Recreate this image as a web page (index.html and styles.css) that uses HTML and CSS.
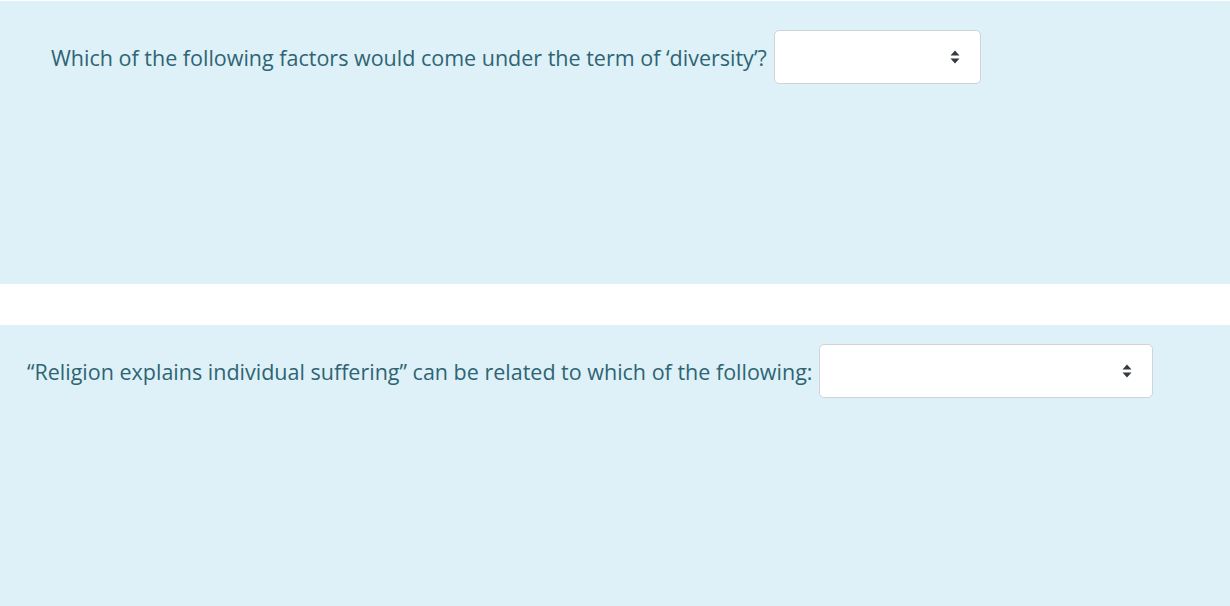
FILE: index.html
```html
<!DOCTYPE html>
<html lang="en">
<head>
<meta charset="utf-8">
<title>Questions</title>
<link rel="stylesheet" href="styles.css">
</head>
<body>
<div class="panel panel-first">
  <div class="row">
    <span class="qtext">Which of the following factors would come under the term of ‘diversity’?</span>
    <span class="select select-short">
      <svg class="arrows" width="10" height="14" viewBox="0 0 10 14"><path d="M5 0.5 L9.5 5.5 H0.5 Z M5 13.5 L9.5 8.5 H0.5 Z" fill="#343a40"/></svg>
    </span>
  </div>
</div>
<div class="panel panel-second">
  <div class="row">
    <span class="qtext">“Religion explains individual suffering” can be related to which of the following:</span>
    <span class="select select-long">
      <svg class="arrows" width="10" height="14" viewBox="0 0 10 14"><path d="M5 0.5 L9.5 5.5 H0.5 Z M5 13.5 L9.5 8.5 H0.5 Z" fill="#343a40"/></svg>
    </span>
  </div>
</div>
</body>
</html>
```
FILE: styles.css
```css
html, body {
  margin: 0;
  padding: 0;
  background: #ffffff;
}
body {
  font-family: "Open Sans", "Noto Sans", sans-serif;
  font-size: 21.5px;
  color: #2f6473;
}
.panel {
  background: #def1f8;
  box-sizing: border-box;
}
.panel-first {
  margin-top: 1px;
  height: 283px;
  padding: 29px 0 0 51px;
}
.panel-second {
  margin-top: 41px;
  height: 290px;
  padding: 19px 0 0 27px;
}
.row {
  display: flex;
  align-items: center;
  gap: 7px;
}
.qtext {
  white-space: nowrap;
}
.select {
  box-sizing: border-box;
  height: 54px;
  background: #ffffff;
  border: 1px solid #ced4da;
  border-radius: 5px;
  display: flex;
  align-items: center;
  justify-content: flex-end;
  padding-right: 20px;
}
.select-short { width: 207px; }
.select-long { width: 334px; }
.arrows { display: block; }
```
